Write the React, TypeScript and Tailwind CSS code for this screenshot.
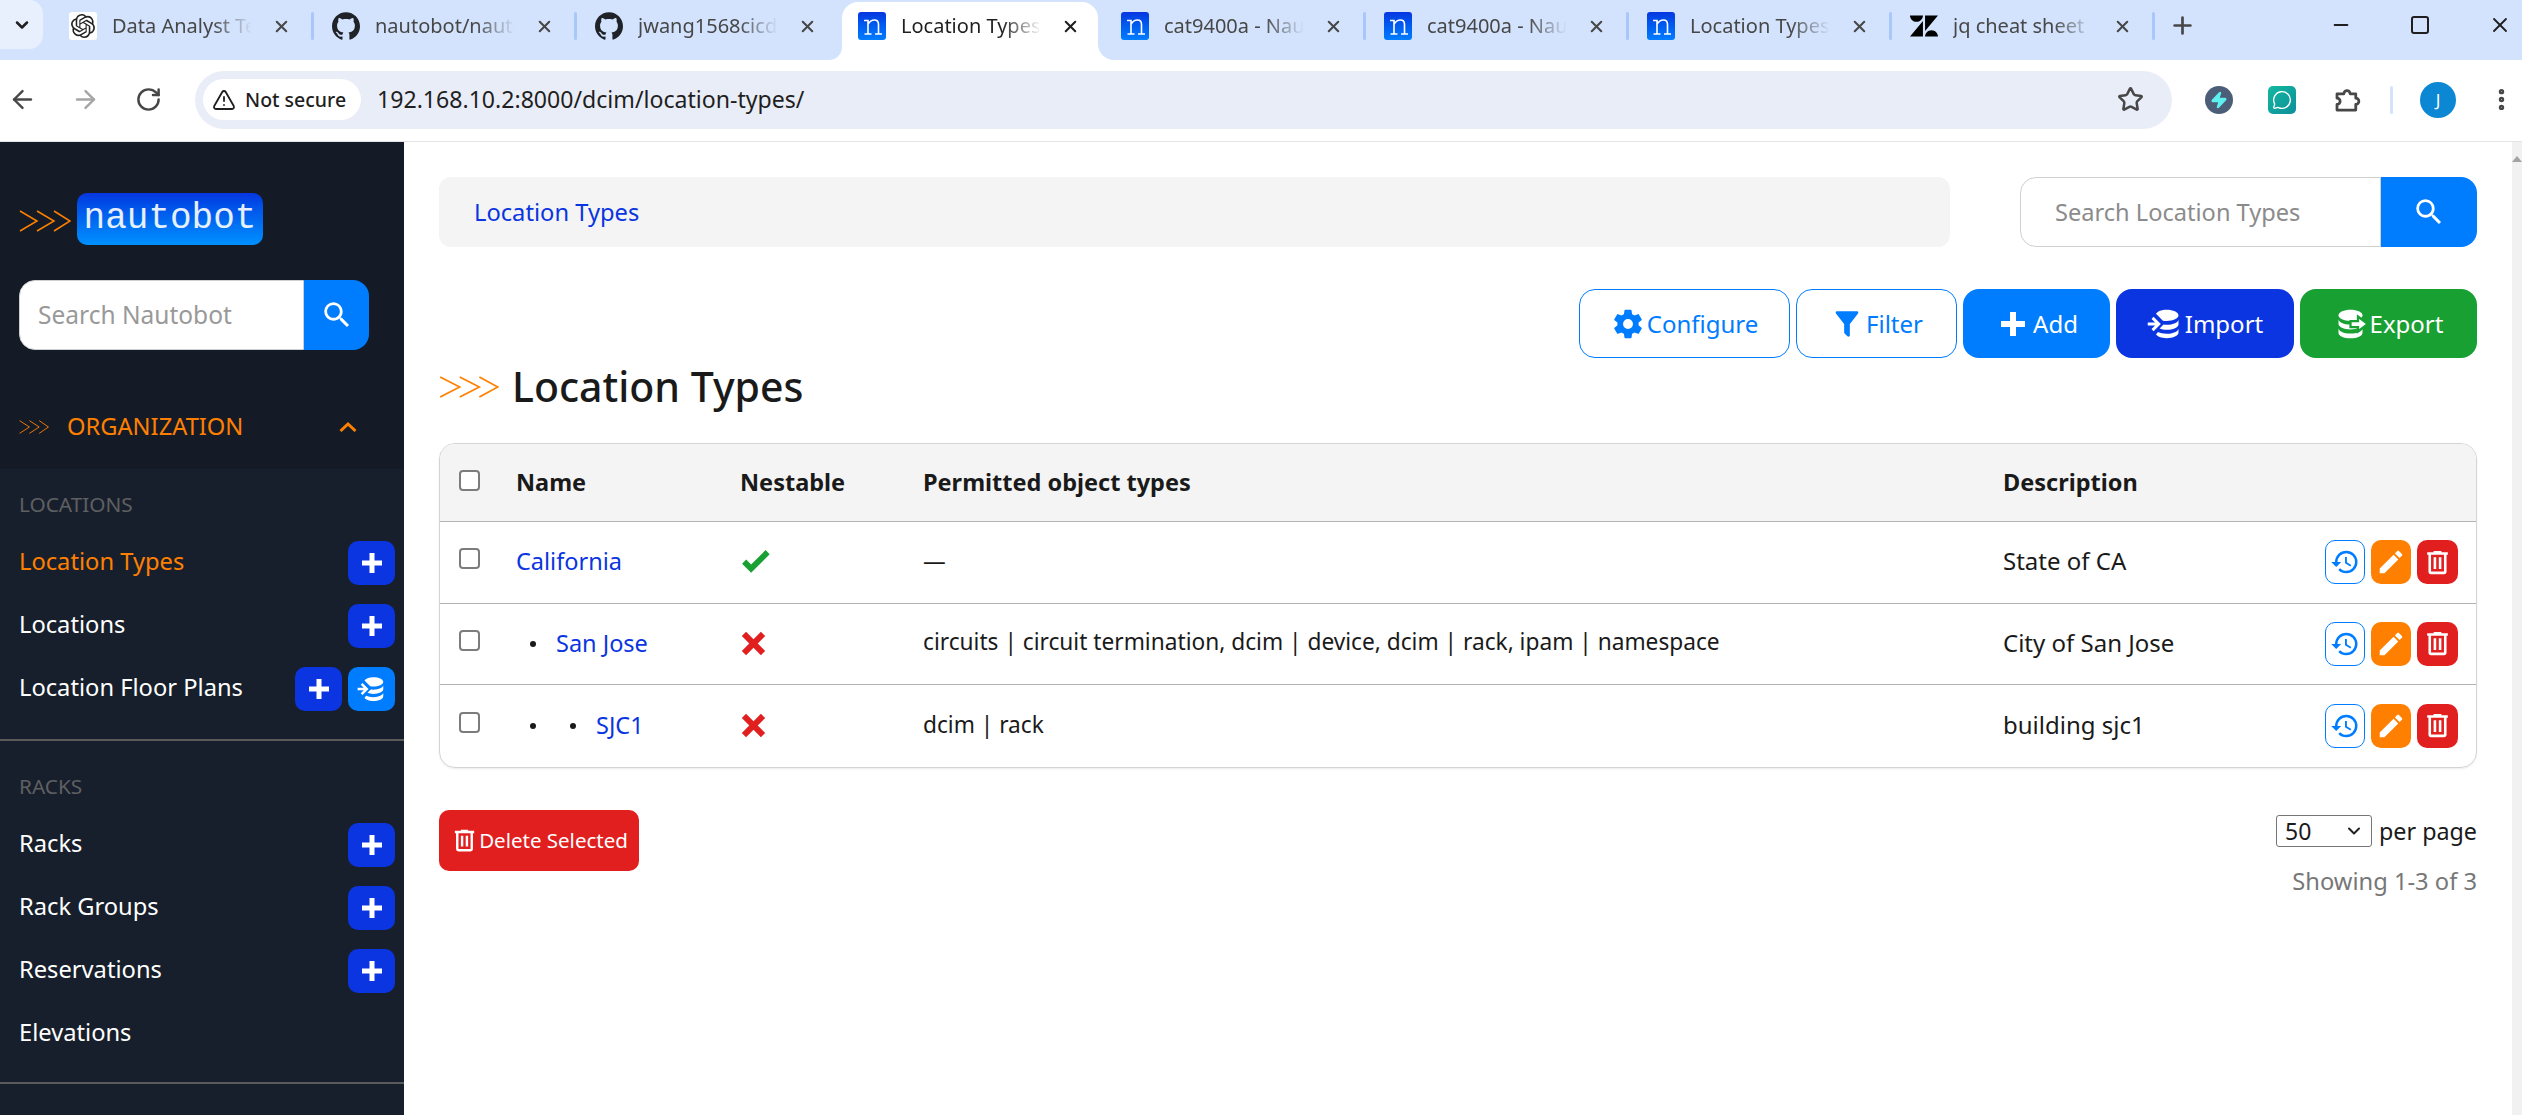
import React from "react";
import { ArrowLeft, ArrowRight, RotateCw, X, Plus, Minus, Star, TriangleAlert, Zap, EllipsisVertical, ChevronDown, MessageCircle } from "lucide-react";
import { SiOpenai, SiGithub, SiZendesk } from "react-icons/si";

const MDI = {
  magnify: "M9.5,3A6.5,6.5 0 0,1 16,9.5C16,11.11 15.41,12.59 14.44,13.73L14.71,14H15.5L20.5,19L19,20.5L14,15.5V14.71L13.73,14.44C12.59,15.41 11.11,16 9.5,16A6.5,6.5 0 0,1 3,9.5A6.5,6.5 0 0,1 9.5,3M9.5,5C7,5 5,7 5,9.5C5,12 7,14 9.5,14C12,14 14,12 14,9.5C14,7 12,5 9.5,5Z",
  cog: "M12,15.5A3.5,3.5 0 0,1 8.5,12A3.5,3.5 0 0,1 12,8.5A3.5,3.5 0 0,1 15.5,12A3.5,3.5 0 0,1 12,15.5M19.43,12.97C19.47,12.65 19.5,12.33 19.5,12C19.5,11.67 19.47,11.34 19.43,11L21.54,9.37C21.73,9.22 21.78,8.95 21.66,8.73L19.66,5.27C19.54,5.05 19.27,4.96 19.05,5.05L16.56,6.05C16.04,5.66 15.5,5.32 14.87,5.07L14.5,2.42C14.46,2.18 14.25,2 14,2H10C9.75,2 9.54,2.18 9.5,2.42L9.13,5.07C8.5,5.32 7.96,5.66 7.44,6.05L4.95,5.05C4.73,4.96 4.46,5.05 4.34,5.27L2.34,8.73C2.21,8.95 2.27,9.22 2.46,9.37L4.57,11C4.53,11.34 4.5,11.67 4.5,12C4.5,12.33 4.53,12.65 4.57,12.97L2.46,14.63C2.27,14.78 2.21,15.05 2.34,15.27L4.34,18.73C4.46,18.95 4.73,19.03 4.95,18.95L7.44,17.94C7.96,18.34 8.5,18.68 9.13,18.93L9.5,21.58C9.54,21.82 9.75,22 10,22H14C14.25,22 14.46,21.82 14.5,21.58L14.87,18.93C15.5,18.67 16.04,18.34 16.56,17.94L19.05,18.95C19.27,19.03 19.54,18.95 19.66,18.73L21.66,15.27C21.78,15.05 21.73,14.78 21.54,14.63L19.43,12.97Z",
  filter: "M14,12V19.88C14.04,20.18 13.94,20.5 13.71,20.71C13.32,21.1 12.69,21.1 12.3,20.71L10.29,18.7C10.06,18.47 9.96,18.16 10,17.87V12H9.97L4.21,4.62C3.87,4.19 3.95,3.56 4.38,3.22C4.57,3.08 4.78,3 5,3V3H19V3C19.22,3 19.43,3.08 19.62,3.22C20.05,3.56 20.13,4.19 19.79,4.62L14.03,12H14Z",
  plus: "M20 14H14V20H10V14H4V10H10V4H14V10H20V14Z",
  pencil: "M20.71,7.04C21.1,6.65 21.1,6 20.71,5.63L18.37,3.29C18,2.9 17.35,2.9 16.96,3.29L15.12,5.12L18.87,8.87M3,17.25V21H6.75L17.81,9.93L14.06,6.18L3,17.25Z",
  trash: "M9,3V4H4V6H5V19A2,2 0 0,0 7,21H17A2,2 0 0,0 19,19V6H20V4H15V3H9M7,6H17V19H7V6M9,8V17H11V8H9M13,8V17H15V8H13Z",
  history: "M13.5,8H12V13L16.28,15.54L17,14.33L13.5,12.25V8M13,3A9,9 0 0,0 4,12H1L4.96,16.03L9,12H6A7,7 0 0,1 13,5A7,7 0 0,1 20,12A7,7 0 0,1 13,19C11.07,19 9.32,18.21 8.06,16.94L6.64,18.36C8.27,20 10.5,21 13,21A9,9 0 0,0 22,12A9,9 0 0,0 13,3",
  check: "M9,20.42L2.79,14.21L5.62,11.38L9,14.77L18.88,4.88L21.71,7.71L9,20.42Z",
  close: "M20 6.91L17.09 4L12 9.09L6.91 4L4 6.91L9.09 12L4 17.09L6.91 20L12 14.91L17.09 20L20 17.09L14.91 12L20 6.91Z",
  dbImport: "M13 2.5C9.6 2.5 6.9 3.6 6 5.2L10.6 9.8C11.4 10 12.2 10 13 10C17.4 10 21 8.4 21 6.2C21 4.1 17.4 2.5 13 2.5M4.4 7.2L3 8.6L5.4 11H0.5V13H5.4L3 15.4L4.4 16.8L9.2 12M21 8.8C21 10.9 17.5 12.5 13 12.5C12.3 12.5 11.6 12.5 11 12.4L8.4 15C9.8 15.6 11.3 15.9 13 15.9C17.4 15.9 21 14.3 21 12.2M21 14.8C21 16.9 17.4 18.5 13 18.5C10.8 18.5 8.8 18.1 7.4 17.4L6 18.9C6.8 20.4 9.6 21.5 13 21.5C17.4 21.5 21 19.9 21 17.7",
};

function Mdi({ d, className }: { d: string; className: string }) {
  return (
    <svg viewBox="0 0 24 24" fill="currentColor" className={className}>
      <path d={d} />
    </svg>
  );
}

function DbExport({ className }: { className: string }) {
  return (
    <svg viewBox="0 0 24 24" fill="white" className={className}>
      <path d="M11 2.5C6.6 2.5 3 4.1 3 6.2C3 8.4 6.6 10 11 10C15.4 10 19 8.4 19 6.2C19 4.1 15.4 2.5 11 2.5Z" />
      <path d="M3 8.6V11.8C3 14 6.6 15.6 11 15.6C15.4 15.6 19 14 19 11.8V8.6C19 10.8 15.4 12.4 11 12.4C6.6 12.4 3 10.8 3 8.6Z" />
      <path d="M3 14.6V17.8C3 20 6.6 21.5 11 21.5C15.4 21.5 19 20 19 17.8V14.6C19 16.8 15.4 18.4 11 18.4C6.6 18.4 3 16.8 3 14.6Z" />
      <path d="M16 7V10H11V14H16V17L22.5 12Z" stroke="#18a032" strokeWidth="1.5" />
    </svg>
  );
}

function Arrows({ className }: { className: string }) {
  return (
    <svg viewBox="0 0 52 22" preserveAspectRatio="none" fill="none" stroke="#ff8000" strokeWidth="1.5" className={className}>
      <path d="M1 1L18 11L1 21M18 1L35 11L18 21M35 1L51 11L35 21" />
    </svg>
  );
}

function NBox() {
  return (
    <span className="w-[28px] h-[28px] shrink-0 rounded-[3px] bg-gradient-to-b from-[#0a35e0] to-[#007dff] text-white flex items-center justify-center">
      <svg viewBox="0 0 28 28" fill="none" stroke="currentColor" strokeWidth="1.6" className="w-[28px] h-[28px]">
        <path d="M6 8.5H10V22M6.5 22H13.5M10 12.5C11.5 9.5 14 8 16.5 8C19.5 8 20.5 10 20.5 12.5V22M17 22H24" />
      </svg>
    </span>
  );
}

const tabs: { title: string; icon: React.ReactNode; active?: boolean; sep?: boolean }[] = [
  { title: "Data Analyst Team", icon: <span className="w-[28px] h-[28px] shrink-0 rounded-[3px] bg-white flex items-center justify-center"><SiOpenai className="w-[24px] h-[24px] text-[#222]" /></span>, sep: true },
  { title: "nautobot/nautobot", icon: <SiGithub className="w-[28px] h-[28px] shrink-0 text-[#1f2328]" />, sep: true },
  { title: "jwang1568cicd/nau", icon: <SiGithub className="w-[28px] h-[28px] shrink-0 text-[#1f2328]" /> },
  { title: "Location Types | N", icon: <NBox />, active: true },
  { title: "cat9400a - Nautobot", icon: <NBox />, sep: true },
  { title: "cat9400a - Nautobot", icon: <NBox />, sep: true },
  { title: "Location Types | N", icon: <NBox />, sep: true },
  { title: "jq cheat sheet | Zen", icon: <SiZendesk className="w-[28px] h-[28px] shrink-0 text-black" />, sep: true },
];

function Tab({ t }: { t: (typeof tabs)[number] }) {
  return (
    <div className="relative w-[263px] h-[60px] shrink-0 flex items-center pl-[20px] pb-[8px]">
      {t.active && (
        <>
          <div className="absolute left-[4px] right-[3px] top-[2px] bottom-0 bg-white rounded-t-[16px]" />
          <div className="absolute right-[-13px] bottom-0 w-[16px] h-[16px] bg-white" />
          <div className="absolute right-[-13px] bottom-0 w-[16px] h-[16px] bg-[#d3e3fd] rounded-bl-[16px]" />
          <div className="absolute left-[-9px] bottom-0 w-[13px] h-[16px] bg-white" />
          <div className="absolute left-[-9px] bottom-0 w-[13px] h-[16px] bg-[#d3e3fd] rounded-br-[16px]" />
        </>
      )}
      <div className="relative flex items-center">
        {t.icon}
        <span className={`ml-[15px] w-[140px] overflow-hidden whitespace-nowrap text-[20px] leading-[28px] [mask-image:linear-gradient(to_right,black_72%,transparent_100%)] ${t.active ? "text-[#1f1f1f]" : "text-[#474747]"}`}>
          {t.title}
        </span>
        <X className={`ml-[20px] w-[19px] h-[19px] ${t.active ? "text-[#1f1f1f]" : "text-[#474747]"}`} strokeWidth={2.6} />
      </div>
      {t.sep && <div className="absolute right-[-2px] top-[12px] w-[3px] h-[28px] rounded-full bg-[#a8c7fa]" />}
    </div>
  );
}

function SideBtn({ light, icon }: { light?: boolean; icon?: string }) {
  return (
    <span className={`w-[47px] h-[44px] rounded-[10px] flex items-center justify-center text-white ${light ? "bg-[#007dff]" : "bg-[#0a35e0]"}`}>
      <Mdi d={icon ?? MDI.plus} className="w-[30px] h-[30px]" />
    </span>
  );
}

function SideRow({ label, active, btn = true, extra }: { label: string; active?: boolean; btn?: boolean; extra?: boolean }) {
  return (
    <div className="h-[44px] flex items-center justify-between pl-[19px] pr-[9px]">
      <span className={`text-[23.7px] leading-[40px] pb-[4px] ${active ? "text-[#ff8000]" : "text-white"}`}>{label}</span>
      <div className="flex gap-[6px]">
        {btn && <SideBtn />}
        {extra && <SideBtn light icon={MDI.dbImport} />}
      </div>
    </div>
  );
}

function SideGroup({ title, children, className }: { title: string; children: React.ReactNode; className: string }) {
  return (
    <div className={`border-b-2 border-[#5a5a5a] ${className}`}>
      <div className="h-[30px] pl-[19px] text-[20.8px] leading-[30px] text-[#5f6062]">{title}</div>
      <div className="mt-[22px] flex flex-col gap-[19px]">{children}</div>
    </div>
  );
}

function SearchBox({ placeholder, outer, className, btn }: { placeholder: string; outer: string; className: string; btn: string }) {
  return (
    <div className={`flex h-[70px] ${outer}`}>
      <div className={`flex-1 bg-white rounded-l-[16px] border border-[#d0d0d0] flex items-center pt-[1px] text-[#8b8b8b] ${className}`}>
        {placeholder}
      </div>
      <div className={`bg-[#007dff] rounded-r-[16px] flex items-center justify-center text-white ${btn}`}>
        <Mdi d={MDI.magnify} className="w-[34px] h-[34px]" />
      </div>
    </div>
  );
}

function TopBtn({ label, icon, className, w, gap = "gap-[2px]" }: { label: string; icon: React.ReactNode; className: string; w: string; gap?: string }) {
  return (
    <button className={`h-[69px] rounded-[16px] flex items-center justify-center text-[24px] ${gap} ${w} ${className}`}>
      {icon}
      <span>{label}</span>
    </button>
  );
}

function Check() {
  return <input type="checkbox" className="appearance-none block w-[21px] h-[21px] rounded-[4px] border-2 border-[#7c7c7c] bg-white" />;
}

function RowActions() {
  return (
    <div className="flex justify-end gap-[6px] pr-[18px]">
      <span className="w-[40px] h-[44px] rounded-[10px] border border-[#007dff] text-[#007dff] flex items-center justify-center">
        <Mdi d={MDI.history} className="w-[30px] h-[30px]" />
      </span>
      <span className="w-[40px] h-[44px] rounded-[10px] bg-[#ff8000] text-white flex items-center justify-center">
        <Mdi d={MDI.pencil} className="w-[30px] h-[30px]" />
      </span>
      <span className="w-[41px] h-[44px] rounded-[10px] bg-[#e21f1f] text-white flex items-center justify-center">
        <Mdi d={MDI.trash} className="w-[31px] h-[31px]" />
      </span>
    </div>
  );
}

function Indent() {
  return (
    <span className="w-[40px] shrink-0 pl-[14px] flex items-center">
      <span className="w-[6px] h-[6px] rounded-full bg-[#1a1a1a]" />
    </span>
  );
}

const rows = [
  { h: "h-[82px]", name: "California", prefix: [], ok: true, types: "—", desc: "State of CA" },
  { h: "h-[81px]", name: "San Jose", prefix: [1], ok: false, types: "circuits | circuit termination, dcim | device, dcim | rack, ipam | namespace", desc: "City of San Jose" },
  { h: "h-[83px]", name: "SJC1", prefix: [1, 2], ok: false, types: "dcim | rack", desc: "building sjc1" },
];

export default function App() {
  return (
    <div className="w-[2522px] h-[1115px] overflow-hidden flex flex-col bg-white font-['Noto_Sans',sans-serif] text-[#1a1a1a]">
      {/* tab strip */}
      <div className="h-[60px] shrink-0 bg-[#d3e3fd] flex items-start">
        <div className="w-[43px] h-[49px] bg-[#e8f0fe] rounded-br-[14px] rounded-tr-[14px] flex items-center justify-center shrink-0">
          <ChevronDown className="w-[20px] h-[20px] text-[#1f1f1f]" strokeWidth={3} />
        </div>
        <div className="flex ml-[6px]">
          {tabs.map((t, i) => (
            <Tab key={i} t={t} />
          ))}
        </div>
        <div className="w-[58px] h-[50px] flex items-center justify-center">
          <Plus className="w-[27px] h-[27px] text-[#474747]" strokeWidth={2.4} />
        </div>
        <div className="ml-auto h-[50px] flex items-center gap-[59px] pr-[10px]">
          <Minus className="w-[22px] h-[22px] text-[#1f1f1f]" strokeWidth={2} />
          <span className="w-[18px] h-[18px] border-2 border-[#1f1f1f] rounded-[3px]" />
          <X className="w-[24px] h-[24px] text-[#1f1f1f]" strokeWidth={1.8} />
        </div>
      </div>

      {/* toolbar */}
      <div className="h-[82px] shrink-0 flex items-center pb-[2px] border-b border-[#e4e4e4]">
        <div className="flex gap-[19px]">
          <span className="w-[44px] flex justify-center"><ArrowLeft className="w-[29px] h-[29px] text-[#474747]" strokeWidth={2} /></span>
          <span className="w-[44px] flex justify-center"><ArrowRight className="w-[29px] h-[29px] text-[#a5a5a5]" strokeWidth={2} /></span>
          <span className="w-[44px] flex justify-center pt-[1px]"><RotateCw className="w-[27px] h-[27px] text-[#474747]" strokeWidth={2.2} /></span>
        </div>
        <div className="ml-[25px] w-[1977px] h-[58px] rounded-full bg-[#e9edf7] flex items-center pl-[8px] pr-[28px]">
          <div className="w-[158px] h-[41px] rounded-full bg-white flex items-center pl-[9px] gap-[9px]">
            <TriangleAlert className="w-[24px] h-[24px] text-[#1f1f1f]" strokeWidth={1.8} />
            <span className="text-[19.5px] text-[#1f1f1f] font-medium whitespace-nowrap">Not secure</span>
          </div>
          <span className="ml-[16px] text-[23.1px] text-[#1f1f1f]">192.168.10.2:8000/dcim/location-types/</span>
          <Star className="ml-auto w-[27px] h-[27px] text-[#474747]" strokeWidth={2.2} />
        </div>
        <div className="flex-1 flex items-center pl-[33px]">
          <span className="w-[28px] h-[28px] rounded-full bg-[#4c5d78] flex items-center justify-center">
            <Zap className="w-[18px] h-[18px] text-[#5ff0f0] fill-[#5ff0f0]" />
          </span>
          <span className="ml-[35px] w-[28px] h-[28px] rounded-[5px] bg-gradient-to-br from-[#14b8a0] to-[#0f8f9a] flex items-center justify-center">
            <MessageCircle className="w-[20px] h-[20px] text-white" strokeWidth={1.6} />
          </span>
          <svg viewBox="0 0 24 24" fill="none" stroke="#474747" strokeWidth="2.2" strokeLinejoin="round" className="ml-[36px] w-[30px] h-[30px]">
            <path d="M4 7H9.5A2.5 2.5 0 0 1 14.5 7H19V10.5A2.5 2.5 0 0 1 19 15.5V20H4V15.5A2.5 2.5 0 0 0 4 10.5Z" />
          </svg>
          <span className="ml-[28px] w-[3px] h-[28px] rounded-full bg-[#d3e3fd]" />
          <span className="ml-[27px] w-[36px] h-[36px] rounded-full bg-[#0b87d4] text-white text-[17px] flex items-center justify-center">J</span>
          <EllipsisVertical className="ml-[32px] w-[27px] h-[27px] text-[#474747]" strokeWidth={2.8} />
        </div>
      </div>

      {/* body */}
      <div className="flex-1 min-h-0 flex">
        <aside className="w-[404px] shrink-0 bg-[#181f2c] flex flex-col overflow-hidden">
          <div className="h-[327px] shrink-0 bg-[#141b27] pt-[51px]">
            <div className="flex items-center pl-[19px] h-[52px]">
              <Arrows className="w-[52px] h-[22px] mt-[4px]" />
              <div className="ml-[6px] w-[186px] h-[52px] rounded-[10px] bg-gradient-to-b from-[#0a35e0] to-[#0090ff] flex items-center justify-center text-white/90 font-['Liberation_Mono',monospace] text-[36px] leading-none pb-[1px]">
                nautobot
              </div>
            </div>
            <SearchBox placeholder="Search Nautobot" outer="mt-[35px] ml-[19px] w-[350px]" className="pl-[18px] text-[24.5px] text-[#999]" btn="w-[65px]" />
            <div className="mt-[57px] h-[40px] flex items-center pl-[19px]">
              <Arrows className="w-[30px] h-[14px]" />
              <span className="ml-[18px] text-[23.7px] text-[#ff8000]">ORGANIZATION</span>
              <svg viewBox="0 0 18 12" fill="none" stroke="#ff8000" strokeWidth="3" className="ml-auto mr-[47px] w-[18px] h-[12px]">
                <path d="M1.5 10L9 3L16.5 10" />
              </svg>
            </div>
          </div>
          <SideGroup title="LOCATIONS" className="pt-[20px] pb-[28px]">
            <SideRow label="Location Types" active />
            <SideRow label="Locations" />
            <SideRow label="Location Floor Plans" extra />
          </SideGroup>
          <SideGroup title="RACKS" className="pt-[30px] pb-[26px]">
            <SideRow label="Racks" />
            <SideRow label="Rack Groups" />
            <SideRow label="Reservations" />
            <SideRow label="Elevations" btn={false} />
          </SideGroup>
        </aside>

        <main className="flex-1 min-w-0 px-[35px] pt-[35px]">
          <div className="flex justify-between">
            <div className="w-[1511px] h-[70px] rounded-[12px] bg-[#f4f4f4] flex items-center pl-[35px] pt-[1px] text-[23.7px] text-[#0a35e0]">Location Types</div>
            <SearchBox placeholder="Search Location Types" outer="w-[457px]" className="pl-[34px] text-[23.6px]" btn="w-[96px]" />
          </div>
          <div className="mt-[42px] flex justify-end gap-[6px]">
            <TopBtn label="Configure" icon={<Mdi d={MDI.cog} className="w-[34px] h-[34px]" />} w="w-[211px]" className="bg-white border border-[#007dff] text-[#007dff]" />
            <TopBtn label="Filter" icon={<Mdi d={MDI.filter} className="w-[34px] h-[34px]" />} w="w-[161px]" className="bg-white border border-[#007dff] text-[#007dff]" />
            <TopBtn label="Add" icon={<Mdi d={MDI.plus} className="w-[36px] h-[36px]" />} w="w-[147px]" className="bg-[#007dff] text-white" />
            <TopBtn label="Import" icon={<Mdi d={MDI.dbImport} className="w-[36px] h-[36px]" />} w="w-[178px]" className="bg-[#0a35e0] text-white" />
            <TopBtn label="Export" icon={<DbExport className="w-[36px] h-[36px]" />} gap="gap-0" w="w-[177px]" className="bg-[#18a032] text-white" />
          </div>
          <div className="mt-[5px] h-[48px] flex items-center">
            <Arrows className="w-[60px] h-[22px]" />
            <h1 className="ml-[13px] text-[41px] font-medium text-[#1a1a1a] leading-[48px] -mt-[2px]">Location Types</h1>
          </div>
          <div className="mt-[32px] rounded-[16px] border border-[#d4d4d4] overflow-hidden shadow-[0_1px_2px_rgba(0,0,0,0.08)]">
            <table className="w-full table-fixed border-collapse">
              <colgroup>
                <col className="w-[76px]" />
                <col className="w-[224px]" />
                <col className="w-[183px]" />
                <col className="w-[1080px]" />
                <col />
                <col className="w-[200px]" />
              </colgroup>
              <thead>
                <tr className="h-[77px] bg-[#f4f4f4] text-left text-[23.5px]">
                  <th className="pl-[19px] pb-[4px]"><Check /></th>
                  <th className="font-bold">Name</th>
                  <th className="font-bold">Nestable</th>
                  <th className="font-bold">Permitted object types</th>
                  <th className="font-bold">Description</th>
                  <th />
                </tr>
              </thead>
              <tbody className="text-[24px]">
                {rows.map((r) => (
                  <tr key={r.name} className={`${r.h} border-t border-[#b4b4b4]`}>
                    <td className="pl-[19px] pb-[7px]"><Check /></td>
                    <td>
                      <div className="flex items-center">
                        {r.prefix.map((p) => (
                          <Indent key={p} />
                        ))}
                        <span className="text-[#0a35e0] text-[23.5px]">{r.name}</span>
                      </div>
                    </td>
                    <td>
                      {r.ok ? <Mdi d={MDI.check} className="w-[35px] h-[35px] text-[#18a032] -ml-[2px] -mt-[3px]" /> : <Mdi d={MDI.close} className="w-[35px] h-[35px] text-[#e21f1f] -ml-[4px]" />}
                    </td>
                    <td className="pb-[2px] text-[22.7px]">{r.types}</td>
                    <td className="pb-[2px]">{r.desc}</td>
                    <td><RowActions /></td>
                  </tr>
                ))}
              </tbody>
            </table>
          </div>
          <div className="mt-[42px] flex justify-between items-start">
            <button className="w-[200px] h-[61px] rounded-[10px] bg-[#e21f1f] text-white flex items-center justify-center text-[20.5px]">
              <Mdi d={MDI.trash} className="w-[29px] h-[29px]" />
              <span>Delete Selected</span>
            </button>
            <div className="flex flex-col items-end">
              <div className="mt-[4px] flex items-center gap-[7px]">
                <div className="relative">
                  <select className="appearance-none block w-[96px] h-[32px] rounded-[3px] border border-[#767676] bg-white text-[23px] leading-[28px] pl-[8px]" defaultValue="50">
                    <option>50</option>
                  </select>
                  <ChevronDown className="absolute right-[8px] top-[6px] w-[20px] h-[20px] text-[#222] pointer-events-none" strokeWidth={2.4} />
                </div>
                <span className="text-[23.3px]">per page</span>
              </div>
              <div className="mt-[15px] text-[23.7px] text-[#777]">Showing 1-3 of 3</div>
            </div>
          </div>
        </main>
        <div className="w-[10px] shrink-0 bg-[#f1f1f1] flex justify-center pt-[14px]">
          <svg viewBox="0 0 10 6" fill="#a3a3a3" className="w-[10px] h-[6px]">
            <path d="M5 0L10 6H0Z" />
          </svg>
        </div>
      </div>
    </div>
  );
}
